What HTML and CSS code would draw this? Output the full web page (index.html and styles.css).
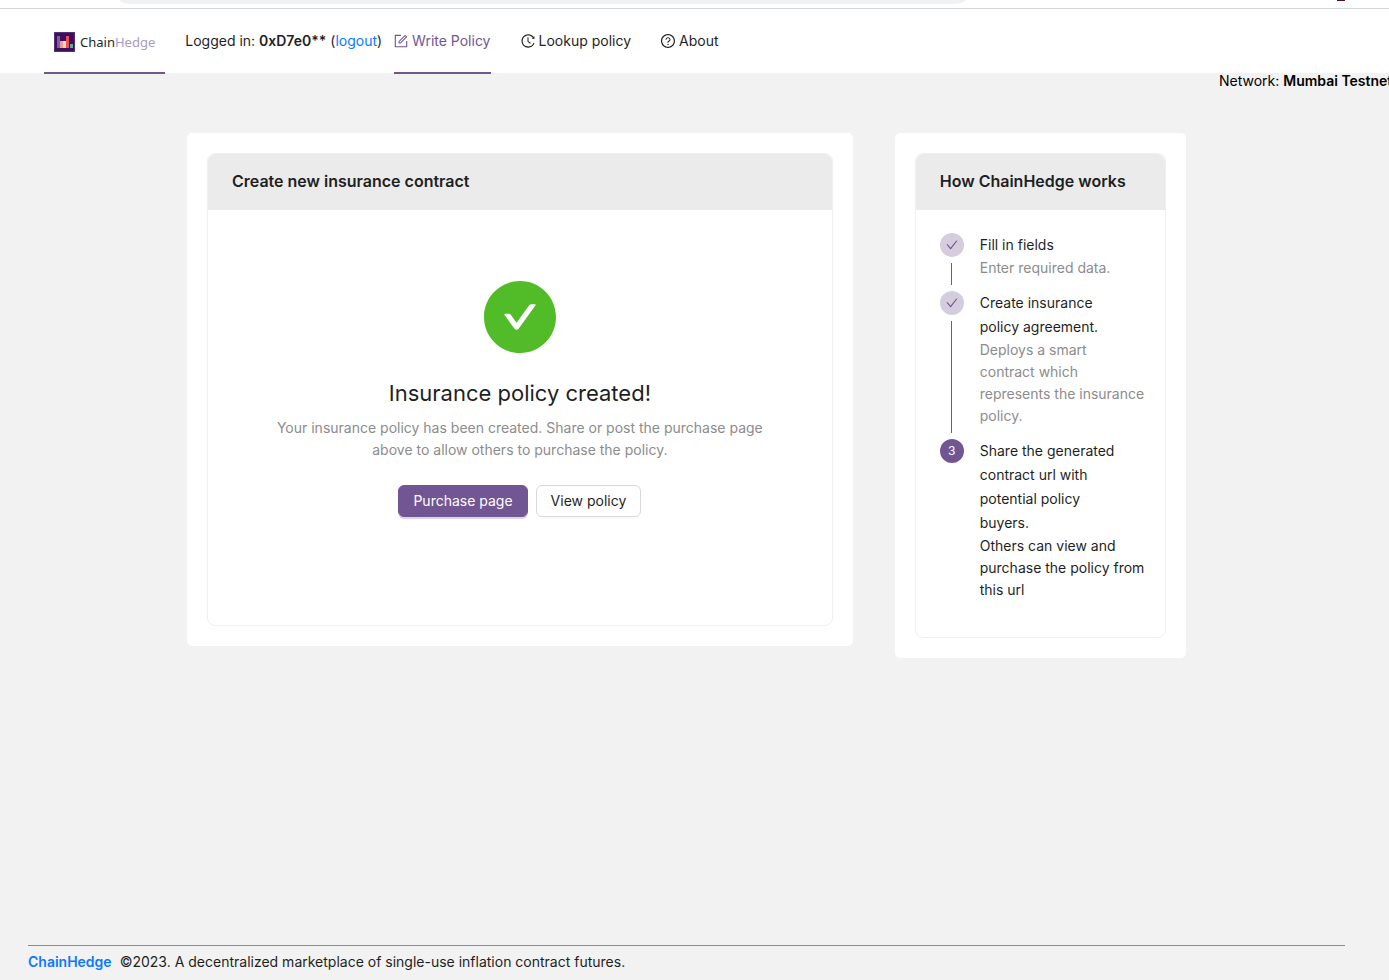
FILE: index.html
```
<!DOCTYPE html>
<html lang="en">
<head>
    <meta charset="UTF-8">
    <meta name="viewport" content="width=device-width, initial-scale=1.0">
    <title>ChainHedge</title>
    <link rel="stylesheet" href="styles.css">
</head>
<body>

    <!-- Browser bar -->
    <div class="browser-bar">
        <div class="address"></div>
        <div class="avatar"></div>
    </div>

    <header class="header">
        <a class="logo" href="#">
            <svg width="21" height="20" viewBox="0 0 21 20">
                <rect width="21" height="20" fill="#3d0f5c"/>
                <rect x=".5" y=".5" width="20" height="19" fill="none" stroke="#57307a"/>
                <rect x="3" y="4" width="3" height="12" fill="#77609c"/>
                <rect x="6" y="9" width="3" height="7" fill="#f09a9a"/>
                <rect x="9" y="9" width="3" height="7" fill="#f3dca0"/>
                <rect x="12" y="4" width="3" height="12" fill="#ee4e5e"/>
                <rect x="16" y="12" width="3" height="4" fill="#4fb58e"/>
            </svg>
            <span class="logo-text">Chain<span>Hedge</span></span>
        </a>
        <div class="account">Logged in: <b>0xD7e0**</b> (<a href="#">logout</a>)</div>
        <nav class="menu">
            <a class="menu-item active" href="#">
                <svg class="icon" viewBox="64 64 896 896"><path d="M904 512h-56c-4.400 0-8 3.600-8 8v320H184V184h320c4.400 0 8-3.600 8-8v-56c0-4.400-3.600-8-8-8H144c-17.700 0-32 14.300-32 32v736c0 17.700 14.300 32 32 32h736c17.700 0 32-14.300 32-32V520c0-4.400-3.600-8-8-8z"/><path d="M355.900 534.900L354 653.800c-.1 8.900 7.100 16.200 16 16.200h.4l118-2.900c2-.1 4-.9 5.400-2.300l415.900-415c3.100-3.100 3.100-8.200 0-11.300L785.400 114.300c-1.600-1.600-3.600-2.300-5.700-2.300s-4.100.8-5.700 2.300l-415.800 415a8.300 8.300 0 00-2.300 5.600zm63.500 23.600L779.700 199l45.200 45.100-360.500 359.700-45.700 1.100.7-46.400z"/></svg>
                Write Policy
            </a>
            <a class="menu-item" href="#">
                <svg class="icon" viewBox="64 64 896 896"><path d="M536.100 273H488c-4.400 0-8 3.600-8 8v275.300c0 2.600 1.200 5 3.300 6.500l165.300 120.700c3.600 2.600 8.600 1.900 11.200-1.700l28.600-39c2.700-3.700 1.900-8.700-1.700-11.200L544.100 528.500V281c0-4.400-3.600-8-8-8zm219.800 75.200l156.800 38.300c5 1.200 9.900-2.600 9.900-7.700l.8-161.500c0-6.700-7.700-10.500-12.900-6.300L752.900 334.100a8 8 0 003 14.100zm167.700 301.100l-56.700-19.500a8 8 0 00-10.100 4.800c-1.900 5.100-3.900 10.100-6 15.100-17.800 42.100-43.300 80-75.900 112.500a353 353 0 01-112.500 75.900 352.180 352.180 0 01-137.700 27.800c-47.800 0-94.100-9.300-137.700-27.800a353 353 0 01-112.500-75.900c-32.500-32.500-58-70.400-75.900-112.500A353.440 353.440 0 01171 512c0-47.800 9.300-94.200 27.800-137.800 17.800-42.100 43.300-80 75.900-112.500a353 353 0 01112.500-75.900C430.600 167.300 477 158 524.800 158s94.100 9.300 137.700 27.800A353 353 0 01775 261.700c10.200 10.300 19.800 21 28.600 32.300l59.800-46.800C784.700 146.600 662.200 81.900 524.600 82 285 82.100 92.600 276.700 95 516.400 97.400 751.900 288.900 942 524.800 942c185.500 0 343.500-117.600 403.700-282.300 1.500-4.200-.7-8.900-4.900-10.400z"/></svg>
                Lookup policy
            </a>
            <a class="menu-item" href="#">
                <svg class="icon" viewBox="64 64 896 896"><path d="M512 64C264.600 64 64 264.600 64 512s200.600 448 448 448 448-200.600 448-448S759.400 64 512 64zm0 820c-205.400 0-372-166.600-372-372s166.600-372 372-372 372 166.600 372 372-166.600 372-372 372z"/><path d="M623.600 316.700C593.600 290.400 554 276 512 276s-81.600 14.500-111.600 40.700C369.200 344 352 380.700 352 420v7.600c0 4.400 3.600 8 8 8h48c4.400 0 8-3.600 8-8V420c0-44.100 43.100-80 96-80s96 35.900 96 80c0 31.100-22 59.600-56.100 72.700-21.200 8.100-39.200 22.300-52.100 40.900-13.100 19-19.900 41.800-19.900 64.900V620c0 4.400 3.600 8 8 8h48c4.400 0 8-3.600 8-8v-22.700a48.300 48.300 0 0130.900-44.800c59-22.700 97.100-74.700 97.100-132.500.1-39.300-17.100-76-48.300-103.300zM472 732a40 40 0 1080 0 40 40 0 10-80 0z"/></svg>
                About
            </a>
        </nav>
    </header>

    <div class="network">Network: <b>Mumbai Testnet</b></div>

    <main class="content">
        <!-- Contract result -->
        <section class="panel">
            <div class="card">
                <h2 class="card-head">Create new insurance contract</h2>
                <div class="result">
                    <svg class="result-icon" viewBox="64 64 896 896"><path d="M512 64C264.600 64 64 264.600 64 512s200.600 448 448 448 448-200.600 448-448S759.400 64 512 64zm193.500 301.700l-210.600 292a31.800 31.800 0 01-51.700 0L318.500 484.900c-3.800-5.300 0-12.700 6.500-12.700h46.900c10.200 0 19.900 4.900 25.900 13.300l71.200 98.800 157.200-218c6-8.300 15.600-13.300 25.900-13.300H699c6.500 0 10.300 7.400 6.500 12.700z"/></svg>
                    <h1 class="result-title">Insurance policy created!</h1>
                    <p class="result-text">Your insurance policy has been created. Share or post the purchase page above to allow others to purchase the policy.</p>
                    <div class="result-buttons">
                        <button class="btn primary" type="button">Purchase page</button>
                        <button class="btn" type="button">View policy</button>
                    </div>
                </div>
            </div>
        </section>

        <!-- Steps -->
        <aside class="panel">
            <div class="card">
                <h2 class="card-head">How ChainHedge works</h2>
                <ol class="steps">
                    <li class="step">
                        <div class="step-rail">
                            <span class="step-icon"><svg viewBox="64 64 896 896"><path d="M912 190h-69.900c-9.800 0-19.100 4.500-25.100 12.200L404.700 724.500 207 474a32 32 0 00-25.100-12.200H112c-6.700 0-10.400 7.700-6.300 12.900l273.900 347c12.800 16.200 37.400 16.200 50.300 0l488.400-618.900c4.100-5.100.4-12.800-6.300-12.800z"/></svg></span>
                        </div>
                        <div class="step-body">
                            <div class="step-title">Fill in fields</div>
                            <div class="step-text">Enter required data.</div>
                        </div>
                    </li>
                    <li class="step">
                        <div class="step-rail">
                            <span class="step-icon"><svg viewBox="64 64 896 896"><path d="M912 190h-69.900c-9.800 0-19.100 4.500-25.100 12.200L404.700 724.500 207 474a32 32 0 00-25.100-12.200H112c-6.700 0-10.400 7.700-6.300 12.900l273.900 347c12.800 16.200 37.400 16.200 50.300 0l488.400-618.900c4.100-5.100.4-12.800-6.300-12.800z"/></svg></span>
                        </div>
                        <div class="step-body">
                            <div class="step-title">Create insurance policy agreement.</div>
                            <div class="step-text">Deploys a smart<br>contract which<br>represents the insurance policy.</div>
                        </div>
                    </li>
                    <li class="step current">
                        <div class="step-rail">
                            <span class="step-icon">3</span>
                        </div>
                        <div class="step-body">
                            <div class="step-title">Share the generated contract url with potential policy buyers.</div>
                            <div class="step-text">Others can view and purchase the policy from this url</div>
                        </div>
                    </li>
                </ol>
            </div>
        </aside>
    </main>

    <footer class="footer">
        <a href="#">ChainHedge</a>
        <span>©2023. A decentralized marketplace of single-use inflation contract futures.</span>
    </footer>

</body>
</html>
```
FILE: styles.css
```
/* Global Styles */
* {
    box-sizing: border-box;
}

body {
    margin: 0;
    min-height: 100vh;
    display: flex;
    flex-direction: column;
    overflow-x: hidden;
    background: #f2f2f2;
    color: #1f1f1f;
    font-family: Inter, "Liberation Sans", sans-serif;
    font-size: 14px;
    line-height: 22px;
}

a {
    color: #0a7aff;
    text-decoration: none;
}

b {
    font-weight: 600;
}

/* Browser bar */
.browser-bar {
    display: flex;
    justify-content: space-between;
    height: 9px;
    padding: 0 44px 0 120px;
    background: #fff;
    border-bottom: 1px solid #d5d6d8;
}

.address {
    width: 69%;
    height: 4px;
    border-radius: 0 0 12px 12px / 0 0 4px 4px;
    background: #eff1f3;
}

.avatar {
    width: 8px;
    height: 1px;
    background: #4a1230;
}

/* Header */
.header {
    display: flex;
    height: 64px;
    padding: 0 44px;
    background: #fff;
    line-height: 64px;
}

.logo {
    display: flex;
    align-items: center;
    gap: 5px;
    height: 65px;
    padding: 2px 10px 0;
    border-bottom: 2px solid #725694;
}

.logo-text {
    color: #1f1f1f;
    font-family: "Noto Sans", sans-serif;
    font-size: 13px;
}

.logo-text span {
    color: #a79bc4;
}

.account {
    margin: 0 12px 0 20px;
}

.menu {
    display: flex;
    gap: 30px;
}

.menu-item {
    display: flex;
    align-items: center;
    gap: 4px;
    height: 65px;
    border-bottom: 2px solid transparent;
    color: #1f1f1f;
}

.menu-item.active {
    color: #725694;
    border-bottom-color: #725694;
}

.icon {
    width: 14px;
    height: 14px;
    fill: currentColor;
}

.network {
    align-self: flex-end;
    width: 170px;
    line-height: 16px;
    color: #000;
    white-space: nowrap;
}

/* Content */
.content {
    display: grid;
    grid-template-columns: 16fr 7fr;
    align-items: start;
    gap: 42px;
    padding: 44px 203px 44px 187px;
}

.panel {
    padding: 20px;
    border-radius: 5px;
    background: #fff;
}

.card {
    border: 1px solid #f0f0f0;
    border-radius: 8px;
}

.card-head {
    height: 56px;
    margin: 0 0 -1px;
    padding: 0 24px;
    border-radius: 8px 8px 0 0;
    background: #ebebeb;
    font-size: 16px;
    font-weight: 600;
    line-height: 55px;
}

/* Result */
.result {
    display: flex;
    flex-direction: column;
    align-items: center;
    padding: 72px 56px 108px;
    text-align: center;
}

.result-icon {
    width: 72px;
    height: 72px;
    fill: #52bb28;
}

.result-title {
    margin: 24px 0 8px;
    font-size: 22px;
    font-weight: 400;
    line-height: 32px;
}

.result-text {
    margin: 0 0 24px;
    color: #8c8c8c;
}

.result-buttons {
    display: flex;
    gap: 8px;
}

.btn {
    height: 32px;
    padding: 0 14px;
    border: 1px solid #d9d9d9;
    border-radius: 6px;
    background: #fff;
    box-shadow: 0 2px 0 rgba(0, 0, 0, 0.02);
    color: #1f1f1f;
    font: inherit;
    cursor: pointer;
}

.btn.primary {
    border-color: #725694;
    background: #725694;
    box-shadow: 0 2px 0 #dbd3e6;
    color: #fff;
}

/* Steps */
.steps {
    margin: 0;
    padding: 24px 16px 24px 24px;
    list-style: none;
}

.step {
    display: flex;
    gap: 16px;
}

.step-rail {
    display: flex;
    flex-direction: column;
    align-items: center;
    width: 24px;
}

.step-rail::after {
    content: '';
    flex: 1;
    width: 1px;
    margin: 6px 0;
    background: #725694;
}

.step:last-child .step-rail::after {
    display: none;
}

.step-icon {
    display: flex;
    align-items: center;
    justify-content: center;
    width: 24px;
    height: 24px;
    border-radius: 50%;
    background: #d5ccde;
    font-size: 12px;
}

.step-icon svg {
    width: 12px;
    height: 12px;
    fill: #725694;
}

.step.current .step-icon {
    background: #725694;
    color: #fff;
}

.step-body {
    flex: 1;
    padding-bottom: 12px;
}

.step-title {
    padding-right: 24px;
    line-height: 24px;
}

.step-text {
    color: #8c8c8c;
}

.step.current .step-text {
    color: #1f1f1f;
}

/* Footer */
.footer {
    display: flex;
    gap: 8px;
    margin: auto 44px 0 28px;
    padding: 5px 0 7px;
    border-top: 1px solid #8c8c8c;
}

.footer a {
    font-weight: 600;
}
```
